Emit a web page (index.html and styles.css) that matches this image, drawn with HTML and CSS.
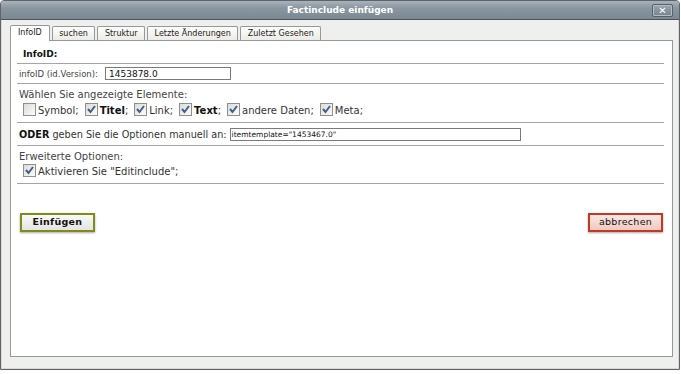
FILE: index.html
```html
<!DOCTYPE html>
<html lang="de">
<head>
    <meta charset="UTF-8">
    <title>Factinclude einfügen</title>
    <link rel="stylesheet" href="styles.css">
</head>
<body>
    <div class="dialog">
        <div class="titlebar">
            <span class="title">Factinclude einfügen</span>
            <a href="javascript:;" class="close">&#x2715;</a>
        </div>
        <div class="tabs">
            <span class="tab active">InfoID</span>
            <span class="tab">suchen</span>
            <span class="tab">Struktur</span>
            <span class="tab">Letzte Änderungen</span>
            <span class="tab">Zuletzt Gesehen</span>
        </div>
        <div class="panel">
            <div class="section head">
                <b>InfoID:</b>
            </div>
            <div class="section idrow">
                <span class="small">infoID (id.Version):</span>
                <span class="field field-id">1453878.0</span>
            </div>
            <div class="section elements">
                <div>Wählen Sie angezeigte Elemente:</div>
                <div class="checks">
                    <label><span class="box"></span><span>Symbol;</span></label>
                    <label><span class="box on"></span><span><b>Titel</b>;</span></label>
                    <label><span class="box on"></span><span>Link;</span></label>
                    <label><span class="box on"></span><span><b>Text</b>;</span></label>
                    <label><span class="box on"></span><span>andere Daten;</span></label>
                    <label><span class="box on"></span><span>Meta;</span></label>
                </div>
            </div>
            <div class="section manual">
                <span><b>ODER</b> geben Sie die Optionen manuell an:</span>
                <span class="field field-tpl">itemtemplate="1453467.0"</span>
            </div>
            <div class="section extended">
                <div>Erweiterte Optionen:</div>
                <div class="checks">
                    <label><span class="box on"></span><span>Aktivieren Sie "Editinclude";</span></label>
                </div>
            </div>
            <div class="buttons">
                <a href="javascript:;" class="btn btn-ok">Einfügen</a>
                <a href="javascript:;" class="btn btn-cancel">abbrechen</a>
            </div>
        </div>
    </div>
</body>
</html>
```

FILE: styles.css
```css
* {
    box-sizing: border-box;
}

body {
    margin: 0;
    background: #fff;
    font-family: "DejaVu Sans", Verdana, sans-serif;
    font-size: 10px;
    color: #333;
}

.dialog {
    width: 680px;
    height: 370px;
    border: 1px solid #5f6468;
    border-radius: 4px 4px 0 0;
    background: #efefed;
    box-shadow: inset 0 0 0 1px #d8d8d4;
}

.titlebar {
    position: relative;
    height: 19px;
    border-bottom: 1px solid #4c555c;
    border-radius: 3px 3px 0 0;
    background: linear-gradient(#a9b3bb, #8996a0 40%, #7c8993);
    text-align: center;
}

.title {
    font-size: 9px;
    font-weight: bold;
    line-height: 18px;
    color: #fff;
}

.close {
    position: absolute;
    right: 6px;
    top: 3px;
    width: 21px;
    height: 13px;
    border: 1px solid #56626b;
    border-radius: 2px;
    background: linear-gradient(#9aa6af, #76838d);
    box-shadow: inset 0 0 0 1px #b3bdc4;
    color: #fff;
    font-size: 10px;
    font-weight: bold;
    line-height: 11px;
    text-decoration: none;
}

.tabs {
    display: flex;
    align-items: flex-end;
    gap: 2px;
    height: 20px;
    padding-left: 9px;
}

.tab {
    height: 14px;
    padding: 0 6.5px;
    border: 1px solid #919b9c;
    border-bottom: none;
    border-radius: 2px 2px 0 0;
    background: linear-gradient(#fdfdfb, #ecebe6);
    font-size: 8px;
    line-height: 13px;
    color: #222;
}

.tab.active {
    position: relative;
    height: 16px;
    margin-bottom: -1px;
    padding: 0 7px;
    background: #fff;
}

.panel {
    width: 663px;
    height: 317px;
    margin-left: 9px;
    padding: 0 8px 0 6px;
    border: 1px solid #919b9c;
    background: #fff;
}

.section {
    border-bottom: 1px solid #a4a4a4;
}

.head {
    height: 23px;
    padding: 8px 0 0 6px;
    font-size: 9px;
    color: #111;
}

.idrow {
    display: flex;
    align-items: center;
    height: 20px;
    padding-left: 2px;
}

.small {
    width: 86px;
    font-size: 8.5px;
    color: #444;
}

.field {
    height: 13px;
    border: 1px solid #7a7a7a;
    background: #fff;
    color: #111;
    white-space: nowrap;
    overflow: hidden;
}

.field-id {
    width: 126px;
    padding-left: 3px;
    font-size: 9px;
    line-height: 12px;
}

.elements {
    height: 39px;
    padding: 5px 0 0 2px;
    color: #444;
}

.checks {
    display: flex;
    gap: 6px;
    margin-top: 2px;
    padding-left: 4px;
}

.checks label {
    display: flex;
    align-items: center;
    gap: 2px;
    padding-top: 2px;
    color: #333;
    line-height: 14px;
}

.checks b {
    color: #111;
}

.box {
    width: 13px;
    height: 13px;
    margin-top: -3px;
    border: 1px solid #8e8f8f;
    background: linear-gradient(135deg, #dcdcd7, #fbfbf9);
}

.box.on {
    background-image: url("data:image/svg+xml,%3Csvg xmlns='http://www.w3.org/2000/svg' width='11' height='11'%3E%3Cpath d='M2 5 L4.5 8 L9 2' fill='none' stroke='%2340608a' stroke-width='2'/%3E%3C/svg%3E"), linear-gradient(135deg, #dcdcd7, #fbfbf9);
    background-position: center;
    background-repeat: no-repeat;
}

.manual {
    display: flex;
    align-items: center;
    gap: 3px;
    height: 23px;
    padding-left: 2px;
    font-size: 9.7px;
}

.manual b {
    color: #111;
}

.field-tpl {
    width: 291px;
    padding-left: 1px;
    font-size: 7.5px;
    line-height: 12px;
}

.extended {
    height: 38px;
    padding: 5px 0 0 2px;
    color: #444;
}

.extended .checks {
    margin-top: 1px;
}

.buttons {
    display: flex;
    justify-content: space-between;
    padding: 29px 1px 0 3px;
}

.btn {
    display: block;
    width: 75px;
    height: 19px;
    border: 2px solid;
    box-shadow: 0 1px 2px #aaa;
    font-size: 9.5px;
    font-weight: bold;
    line-height: 14px;
    letter-spacing: 0.3px;
    text-align: center;
    text-decoration: none;
    color: #111;
}

.btn-ok {
    border-color: #828a1c;
    background: linear-gradient(#f8f8f6, #e4e4e2);
}

.btn-cancel {
    border-color: #c23a24;
    background: linear-gradient(#fbe7e3, #f0c9c1);
    font-weight: normal;
}
```
